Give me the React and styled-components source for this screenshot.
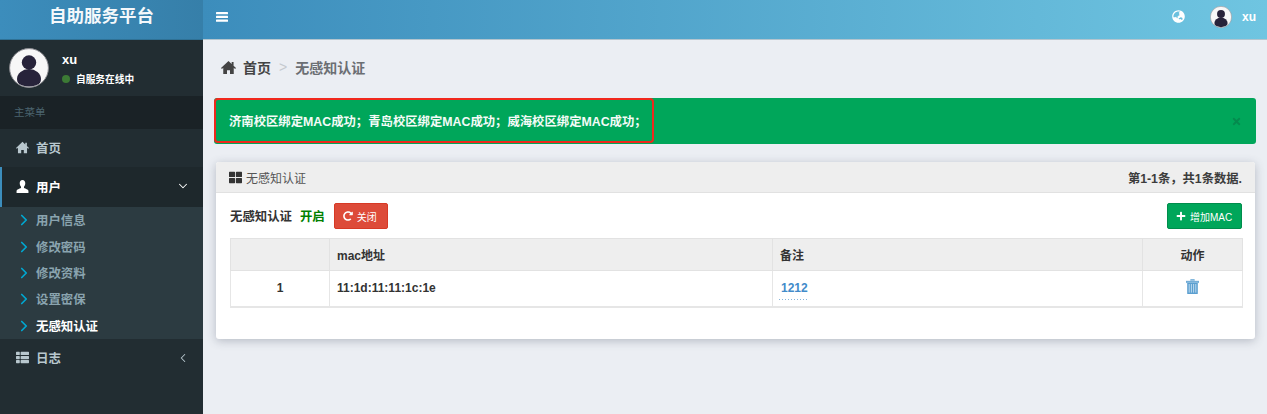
import React from "react";
import styled, { createGlobalStyle } from "styled-components";
import { FaThList, FaThLarge, FaRedoAlt, FaPlus, FaGlobeAsia, FaTimes } from "react-icons/fa";
import { ChevronRight, ChevronDown, ChevronLeft } from "lucide-react";

const GlobalStyle = createGlobalStyle`
  html, body {
    margin: 0;
    padding: 0;
    height: 414px;
    overflow: hidden;
    background: #ebeef3;
    font-family: "Liberation Sans", "Noto Sans CJK SC", sans-serif;
  }
`;

const Page = styled.div`
  display: flex;
  width: 1267px;
  height: 414px;
  overflow: hidden;
`;

const Sidebar = styled.aside`
  width: 203px;
  flex: none;
  background: #222d32;
  display: flex;
  flex-direction: column;
`;

const Logo = styled.div`
  height: 39px;
  background: linear-gradient(90deg, #3c8dbc, #367fa9 100%);
  border-bottom: 1px solid #2f7195;
  color: #f4f8fb;
  font-size: 17.5px;
  font-weight: 700;
  text-align: center;
  line-height: 33px;
`;

const UserPanel = styled.div`
  height: 56px;
  display: flex;
  align-items: center;
  padding-left: 9px;
  gap: 13px;
`;

const UserInfo = styled.div`
  color: #fff;
  display: flex;
  flex-direction: column;
  gap: 5px;
  margin-top: 1px;
`;

const UserName = styled.div`
  font-size: 13px;
  font-weight: 700;
`;

const Status = styled.div`
  display: flex;
  align-items: center;
  gap: 6px;
  font-size: 9.7px;
  font-weight: 700;
`;

const Dot = styled.span`
  width: 8px;
  height: 8px;
  border-radius: 50%;
  background: #3c7a35;
`;

const MenuHeader = styled.div`
  height: 33px;
  background: #1a2226;
  color: #4b646f;
  font-size: 10.5px;
  line-height: 33px;
  padding-left: 14px;
`;

const MenuItem = styled.div`
  height: ${(p) => p.$h}px;
  box-sizing: border-box;
  display: flex;
  align-items: center;
  padding: 0 13px 2px ${(p) => (p.$active ? 14 : 16)}px;
  background: ${(p) => (p.$active ? "#1e282c" : "transparent")};
  border-left: ${(p) => (p.$active ? "2px solid #3c8dbc" : "none")};
  color: ${(p) => (p.$active ? "#fff" : "#b8c7ce")};
  font-size: 12.5px;
  font-weight: 700;
  svg.lead {
    width: 13px;
    height: 13px;
    margin-right: 7px;
  }
`;

const Caret = styled.span`
  margin-left: auto;
  display: flex;
`;

const SubMenu = styled.div`
  background: #2c3b41;
  height: 132px;
  padding: 0 0 0 2px;
  display: flex;
  flex-direction: column;
`;

const SubItem = styled.div`
  height: 26.4px;
  display: flex;
  align-items: center;
  padding-left: 13px;
  gap: 3px;
  font-size: 12.4px;
  font-weight: 700;
  color: ${(p) => (p.$active ? "#fff" : "#8aa4af")};
  svg {
    color: #00a7d0;
    flex: none;
  }
`;

const Main = styled.main`
  flex: 1;
  display: flex;
  flex-direction: column;
  min-width: 0;
`;

const Navbar = styled.header`
  height: 39px;
  flex: none;
  background: linear-gradient(90deg, #3c8dbc, #6fc5e1);
  border-bottom: 1px solid #b3c5cf;
  display: flex;
  align-items: center;
  color: #fff;
  padding: 0 11px 0 13px;
  > * {
    margin-bottom: 6px;
  }
`;

const NavRight = styled.div`
  margin-left: auto;
  display: flex;
  align-items: center;
  font-size: 12px;
  font-weight: 700;
`;

const NavAvatar = styled.span`
  margin: 0 10px 0 25px;
  display: flex;
`;

const Content = styled.div`
  padding: 0 11px 0 11px;
  display: flex;
  flex-direction: column;
`;

const Breadcrumb = styled.div`
  height: 58px;
  box-sizing: border-box;
  padding: 0 0 4px 7px;
  display: flex;
  align-items: center;
  font-size: 14px;
  font-weight: 700;
  color: #444;
  svg {
    width: 15px;
    height: 15px;
    margin-right: 7px;
  }
`;

const Sep = styled.span`
  color: #c5c9ce;
  margin: 0 8px;
  font-weight: 400;
`;

const Crumb = styled.span`
  color: #6b6f73;
`;

const Alert = styled.div`
  position: relative;
  height: 46px;
  background: #00a65a;
  border-radius: 3px;
  display: flex;
  align-items: center;
  padding: 0 15px;
  color: #f4fbf7;
  font-size: 12.35px;
  font-weight: 700;
`;

const Callout = styled.div`
  position: absolute;
  left: 0;
  top: 0;
  width: 440px;
  height: 45px;
  box-sizing: border-box;
  border: 2.5px solid #f0281c;
  border-radius: 4px;
`;

const CloseX = styled.span`
  margin-left: auto;
  margin-right: -1px;
  display: flex;
  color: #048a4e;
  font-size: 11px;
`;

const Box = styled.section`
  margin: 18px 1px 0 2px;
  height: 177px;
  background: #fff;
  border-radius: 3px;
  box-shadow: 0 2px 10px rgba(60, 70, 90, 0.3);
`;

const BoxHeader = styled.div`
  height: 31px;
  box-sizing: border-box;
  background: #eeeeee;
  border-bottom: 1px solid #e1e1e1;
  border-radius: 3px 3px 0 0;
  display: flex;
  align-items: center;
  padding: 0 13px;
  color: #555;
  font-size: 12px;
  svg {
    width: 13px;
    height: 13px;
    color: #333;
    margin-right: 4px;
  }
`;

const Pager = styled.span`
  margin-left: auto;
  font-size: 12.3px;
  font-weight: 700;
  color: #3c3c3c;
  padding-top: 2px;
`;

const BoxBody = styled.div`
  padding: 10px 13px 0 14px;
`;

const Toolbar = styled.div`
  display: flex;
  align-items: center;
  height: 26px;
  margin-bottom: 9px;
  font-size: 12.4px;
  font-weight: 700;
  color: #333;
`;

const OnText = styled.span`
  color: #008000;
  margin: 0 9px 0 8px;
`;

const Button = styled.button`
  height: 26px;
  width: ${(p) => p.$w}px;
  padding: 0 0 0 8px;
  border: 1px solid ${(p) => p.$border};
  background: ${(p) => p.$bg};
  border-radius: 2px;
  color: #fff;
  font: 400 10px "Liberation Sans", "Noto Sans CJK SC", sans-serif;
  display: inline-flex;
  align-items: center;
  gap: 4px;
  margin-left: ${(p) => (p.$right ? "auto" : 0)};
  svg {
    width: 10px;
    height: 10px;
  }
`;

const Table = styled.table`
  width: 1012px;
  border-collapse: collapse;
  table-layout: fixed;
  font-size: 12px;
  color: #333;
`;

const Th = styled.th`
  height: 32px;
  box-sizing: border-box;
  background: #eeeeee;
  border: 1px solid #e2e2e2;
  padding: 0 7px;
  font-weight: 700;
  text-align: ${(p) => (p.$center ? "center" : "left")};
`;

const Td = styled.td`
  height: 36px;
  box-sizing: border-box;
  border: 1px solid #e6e6e6;
  border-bottom-width: 2px;
  padding: 0 7px;
  font-weight: 700;
  text-align: ${(p) => (p.$center ? "center" : "left")};
`;

const Editable = styled.span`
  color: #428bca;
  padding: 0 1px 5px 2px;
  margin-left: -1px;
  background: repeating-linear-gradient(90deg, #86b4da 0 1px, transparent 1px 3px) bottom / 100% 1px no-repeat;
`;

const Avatar = ({ size }) => (
  <svg width={size} height={size} viewBox="0 0 40 40">
    <circle cx="20" cy="20" r="19.4" fill="#f7f7f7" stroke="#8a8a90" strokeWidth="1" />
    <clipPath id={`av${size}`}>
      <circle cx="20" cy="20" r="18.6" />
    </clipPath>
    <g clipPath={`url(#av${size})`} fill="#27233a">
      <circle cx="20" cy="14.5" r="7.2" />
      <ellipse cx="20" cy="31" rx="12" ry="10" />
    </g>
  </svg>
);

const HomeIcon = (props) => (
  <svg viewBox="0 0 16 16" fill="currentColor" {...props}>
    <path d="M8 1 0 8.6l1 1 1.4-1.3V15h4v-4h3.2v4h4V8.3L15 9.6l1-1-2.6-2.5V2h-2v2.2z" />
  </svg>
);

const UserIcon = (props) => (
  <svg viewBox="0 0 14 14" fill="currentColor" {...props}>
    <path d="M7 0C5 0 4 1.5 4 3.6c0 1.5.6 3 1.4 3.8v1.2C3.5 9.4 1 10.1.6 11.6V14h12.8v-2.4c-.4-1.5-2.9-2.2-4.8-3V7.4C9.4 6.6 10 5.1 10 3.6 10 1.5 9 0 7 0z" />
  </svg>
);

const MenuBars = () => (
  <svg width="12" height="10" viewBox="0 0 12 10" fill="#fff">
    <rect width="12" height="2.2" rx="0.5" />
    <rect y="3.8" width="12" height="2.2" rx="0.5" />
    <rect y="7.6" width="12" height="2.2" rx="0.5" />
  </svg>
);

const Trash = () => (
  <svg width="13" height="15" viewBox="0 0 13 15">
    <path d="M4.6 1.6V.6h3.8v1M0 2.2h13v1.4H0z" fill="#5b9fd0" stroke="#5b9fd0" strokeWidth=".5" />
    <path d="M1.2 4h10.6v10.4a.6.6 0 0 1-.6.6H1.8a.6.6 0 0 1-.6-.6z" fill="#5b9fd0" />
    <path d="M3.2 5v8.6M5.4 5v8.6M7.6 5v8.6M9.8 5v8.6" stroke="#bcd9ee" strokeWidth="1" />
  </svg>
);

const subItems = ["用户信息", "修改密码", "修改资料", "设置密保", "无感知认证"];

export default function App() {
  return (
    <Page>
      <GlobalStyle />
      <Sidebar>
        <Logo>自助服务平台</Logo>
        <UserPanel>
          <Avatar size={40} />
          <UserInfo>
            <UserName>xu</UserName>
            <Status>
              <Dot />
              自服务在线中
            </Status>
          </UserInfo>
        </UserPanel>
        <MenuHeader>主菜单</MenuHeader>
        <MenuItem $h={38}>
          <HomeIcon className="lead" />
          首页
        </MenuItem>
        <MenuItem $h={40} $active>
          <UserIcon className="lead" />
          用户
          <Caret>
            <ChevronDown size={14} strokeWidth={1.8} />
          </Caret>
        </MenuItem>
        <SubMenu>
          {subItems.map((s, i) => (
            <SubItem key={s} $active={i === 4}>
              <ChevronRight size={18} strokeWidth={2.3} />
              {s}
            </SubItem>
          ))}
        </SubMenu>
        <MenuItem $h={39}>
          <FaThList className="lead" />
          日志
          <Caret>
            <ChevronLeft size={14} strokeWidth={1.8} />
          </Caret>
        </MenuItem>
      </Sidebar>
      <Main>
        <Navbar>
          <MenuBars />
          <NavRight>
            <FaGlobeAsia size={13} />
            <NavAvatar>
              <Avatar size={22} />
            </NavAvatar>
            xu
          </NavRight>
        </Navbar>
        <Content>
          <Breadcrumb>
            <HomeIcon />
            首页
            <Sep>&gt;</Sep>
            <Crumb>无感知认证</Crumb>
          </Breadcrumb>
          <Alert>
            济南校区绑定MAC成功；青岛校区绑定MAC成功；威海校区绑定MAC成功；
            <CloseX>
              <FaTimes />
            </CloseX>
            <Callout />
          </Alert>
          <Box>
            <BoxHeader>
              <FaThLarge />
              无感知认证
              <Pager>第1-1条，共1条数据.</Pager>
            </BoxHeader>
            <BoxBody>
              <Toolbar>
                无感知认证
                <OnText>开启</OnText>
                <Button $bg="#dd4b39" $border="#d73925" $w={54}>
                  <FaRedoAlt />
                  关闭
                </Button>
                <Button $bg="#00a65a" $border="#008d4c" $w={75} $right>
                  <FaPlus />
                  增加MAC
                </Button>
              </Toolbar>
              <Table>
                <colgroup>
                  <col width="99" />
                  <col width="443" />
                  <col width="370" />
                  <col width="100" />
                </colgroup>
                <thead>
                  <tr>
                    <Th />
                    <Th>mac地址</Th>
                    <Th>备注</Th>
                    <Th $center>动作</Th>
                  </tr>
                </thead>
                <tbody>
                  <tr>
                    <Td $center>1</Td>
                    <Td>11:1d:11:11:1c:1e</Td>
                    <Td>
                      <Editable>1212</Editable>
                    </Td>
                    <Td $center>
                      <Trash />
                    </Td>
                  </tr>
                </tbody>
              </Table>
            </BoxBody>
          </Box>
        </Content>
      </Main>
    </Page>
  );
}
